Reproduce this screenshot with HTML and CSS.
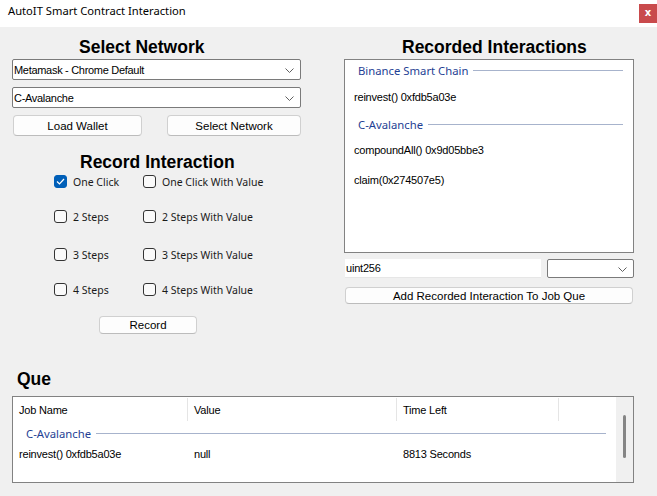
FILE: index.html
```html
<!DOCTYPE html>
<html>
<head>
<meta charset="utf-8">
<link rel="stylesheet" href="styles.css">
</head>
<body>
<div class="window">
  <div class="titlebar">
    <span class="title">AutoIT Smart Contract Interaction</span>
    <span class="close">x</span>
  </div>
  <div class="main">
    <div class="left">
      <h2 class="heading h-select">Select Network</h2>
      <div class="combo combo-wide"><span>Metamask - Chrome Default</span><svg class="chev" width="9" height="5" viewBox="0 0 9 5"><polyline points="0.5,0.5 4.5,4.5 8.5,0.5" fill="none" stroke="#606060" stroke-width="1"/></svg></div>
      <div class="combo combo-wide second"><span>C-Avalanche</span><svg class="chev" width="9" height="5" viewBox="0 0 9 5"><polyline points="0.5,0.5 4.5,4.5 8.5,0.5" fill="none" stroke="#606060" stroke-width="1"/></svg></div>
      <div class="btn-row">
        <div class="btn btn-load">Load Wallet</div>
        <div class="btn btn-select">Select Network</div>
      </div>
      <h2 class="heading h-record">Record Interaction</h2>
      <div class="checks">
        <label class="chk"><span class="box checked"><svg width="9" height="7" viewBox="0 0 9 7"><polyline points="1,3.5 3.5,6 8,1" fill="none" stroke="#fff" stroke-width="1.2"/></svg></span>One Click</label>
        <label class="chk"><span class="box"></span>One Click With Value</label>
        <label class="chk"><span class="box"></span>2 Steps</label>
        <label class="chk"><span class="box"></span>2 Steps With Value</label>
        <label class="chk"><span class="box"></span>3 Steps</label>
        <label class="chk"><span class="box"></span>3 Steps With Value</label>
        <label class="chk"><span class="box"></span>4 Steps</label>
        <label class="chk"><span class="box"></span>4 Steps With Value</label>
      </div>
      <div class="btn btn-record">Record</div>
    </div>
    <div class="right">
      <h2 class="heading h-recorded">Recorded Interactions</h2>
      <div class="listbox">
        <div class="group g1"><span class="gname">Binance Smart Chain</span><span class="gline"></span></div>
        <div class="item i1">reinvest() 0xfdb5a03e</div>
        <div class="group g2"><span class="gname">C-Avalanche</span><span class="gline"></span></div>
        <div class="item i2">compoundAll() 0x9d05bbe3</div>
        <div class="item i3">claim(0x274507e5)</div>
      </div>
      <div class="input-row">
        <div class="textbox">uint256</div>
        <div class="combo combo-small"><span></span><svg class="chev" width="9" height="5" viewBox="0 0 9 5"><polyline points="0.5,0.5 4.5,4.5 8.5,0.5" fill="none" stroke="#606060" stroke-width="1"/></svg></div>
      </div>
      <div class="btn btn-add">Add Recorded Interaction To Job Que</div>
    </div>
  </div>
  <h2 class="heading h-que">Que</h2>
  <div class="listview">
    <div class="lv-body">
      <div class="lv-header">
        <div class="col c1">Job Name</div>
        <div class="col c2">Value</div>
        <div class="col c3">Time Left</div>
        <div class="col c4"></div>
      </div>
      <div class="group g3"><span class="gname">C-Avalanche</span><span class="gline"></span></div>
      <div class="lv-row">
        <div class="cell c1">reinvest() 0xfdb5a03e</div>
        <div class="cell c2">null</div>
        <div class="cell c3">8813 Seconds</div>
      </div>
    </div>
    <div class="scrollbar"><span class="thumb"></span></div>
  </div>
</div>
</body>
</html>
```
FILE: styles.css
```css
* { box-sizing: border-box; }
html, body { margin: 0; padding: 0; }
body {
  width: 657px;
  height: 496px;
  overflow: hidden;
  background: #f0f0f0;
  font-family: "Liberation Sans", Arial, sans-serif;
  font-size: 11px;
  color: #000;
}
.window { width: 657px; height: 496px; }

.titlebar {
  height: 27px;
  background: #fff;
  display: flex;
  align-items: flex-start;
  padding-left: 8px;
}
.title {
  font-family: "Noto Sans", sans-serif;
  font-size: 11.2px;
  line-height: 14px;
  margin-top: 4px;
  color: #000;
}
.close {
  margin-left: auto;
  margin-top: 4px;
  width: 18px;
  height: 19px;
  background: #c94a4c;
  color: #fff;
  font-family: "DejaVu Sans", sans-serif;
  font-weight: bold;
  font-size: 10px;
  line-height: 17px;
  text-align: center;
}

.main { display: flex; }
.heading {
  margin: 0;
  font-family: "Liberation Sans", Arial, sans-serif;
  font-weight: bold;
  font-size: 17.5px;
  line-height: 20px;
  color: #000;
}
.left { width: 344px; padding-left: 12px; }
.right { width: 290px; }

.h-select { margin-top: 10px; padding-left: 67px; height: 22px; }

.combo {
  height: 21px;
  background: #fff;
  border: 1px solid #7a7a7a;
  border-radius: 2px;
  display: flex;
  align-items: center;
  justify-content: space-between;
  padding: 0 6px 0 1px;
  font-size: 11px;
  letter-spacing: -0.3px;
}
.combo-wide { width: 289px; }
.combo.second { margin-top: 7px; }
.chev { flex: none; margin-top: 1px; }

.btn {
  height: 21px;
  background: #fdfdfd;
  border: 1px solid #d0d0d0;
  border-bottom-color: #bcbcbc;
  border-radius: 4px;
  display: flex;
  align-items: center;
  justify-content: center;
  font-size: 11.5px;
}
.btn-row { display: flex; margin-top: 7px; padding-left: 1px; }
.btn-load { width: 129px; }
.btn-select { width: 134px; margin-left: 25px; }

.h-record { margin-top: 16px; padding-left: 68px; height: 19px; }

.checks {
  display: grid;
  grid-template-columns: 89px 150px;
  grid-template-rows: 35px 38px 35px 17px;
  padding-left: 42px;
  margin-top: 2px;
}
.chk {
  display: flex;
  align-items: center;
  height: 17px;
  font-family: "Noto Sans", sans-serif;
  font-size: 10.5px;
  color: #1a1a1a;
}
.box {
  width: 13px;
  height: 13px;
  border: 1px solid #333;
  border-radius: 3px;
  margin-right: 6px;
  background: #fafafa;
  display: flex;
  align-items: center;
  justify-content: center;
  flex: none;
}
.box.checked { background: #005fb8; border-color: #005fb8; }

.btn-record { width: 98px; height: 18px; margin-top: 18px; margin-left: 87px; }

.h-recorded { margin-top: 10px; padding-left: 58px; height: 22px; }
.listbox {
  width: 290px;
  height: 194px;
  background: #fff;
  border: 1px solid #828282;
  padding-top: 1px;
}
.group {
  display: flex;
  align-items: center;
  height: 18px;
  padding-left: 13px;
  padding-right: 10px;
}
.gname {
  font-family: "Noto Sans", sans-serif;
  font-size: 11.3px;
  color: #1f3f94;
  padding-right: 5px;
  white-space: nowrap;
}
.gline { flex: 1; height: 1px; background: #a7b3cc; }
.item { height: 18px; line-height: 18px; padding-left: 9px; letter-spacing: -0.2px; }
.i1 { margin-top: 9px; }
.g2 { margin-top: 9px; }
.i2 { margin-top: 8px; }
.i3 { margin-top: 12px; }

.input-row { display: flex; margin-top: 6px; }
.textbox {
  width: 196px;
  height: 19px;
  margin-left: 1px;
  background: #fff;
  border-bottom: 1px solid #e6e6e6;
  line-height: 18px;
  padding-left: 1px;
  letter-spacing: -0.2px;
}
.combo-small { width: 87px; height: 19px; margin-left: 6px; }
.btn-add { width: 288px; height: 17px; margin-top: 9px; margin-left: 1px; }

.h-que { margin-top: 35px; padding-left: 17px; height: 27px; }
.listview {
  margin-left: 12px;
  width: 622px;
  height: 87px;
  background: #fff;
  border: 1px solid #828282;
  display: flex;
}
.lv-body { flex: 1; letter-spacing: -0.2px; }
.lv-header { display: flex; height: 24px; padding-top: 1px; }
.col {
  height: 23px;
  line-height: 24px;
  padding-left: 6px;
  border-right: 1px solid #e5e5e5;
}
.lv-header .c1 { width: 175px; }
.lv-header .c2 { width: 209px; }
.lv-header .c3 { width: 162px; }
.lv-header .c4 { width: 0; border: none; }
.g3 { height: 18px; margin-top: 3px; padding-left: 13px; padding-right: 10px; letter-spacing: 0; }
.lv-row { display: flex; height: 18px; line-height: 18px; margin-top: 3px; }
.cell { padding-left: 6px; }
.lv-row .c1 { width: 175px; }
.lv-row .c2 { width: 209px; }
.scrollbar {
  width: 17px;
  background: #f0f0f0;
  display: flex;
  justify-content: center;
  padding-top: 18px;
}
.thumb {
  width: 3px;
  height: 43px;
  background: #858585;
  border-radius: 2px;
}
```
